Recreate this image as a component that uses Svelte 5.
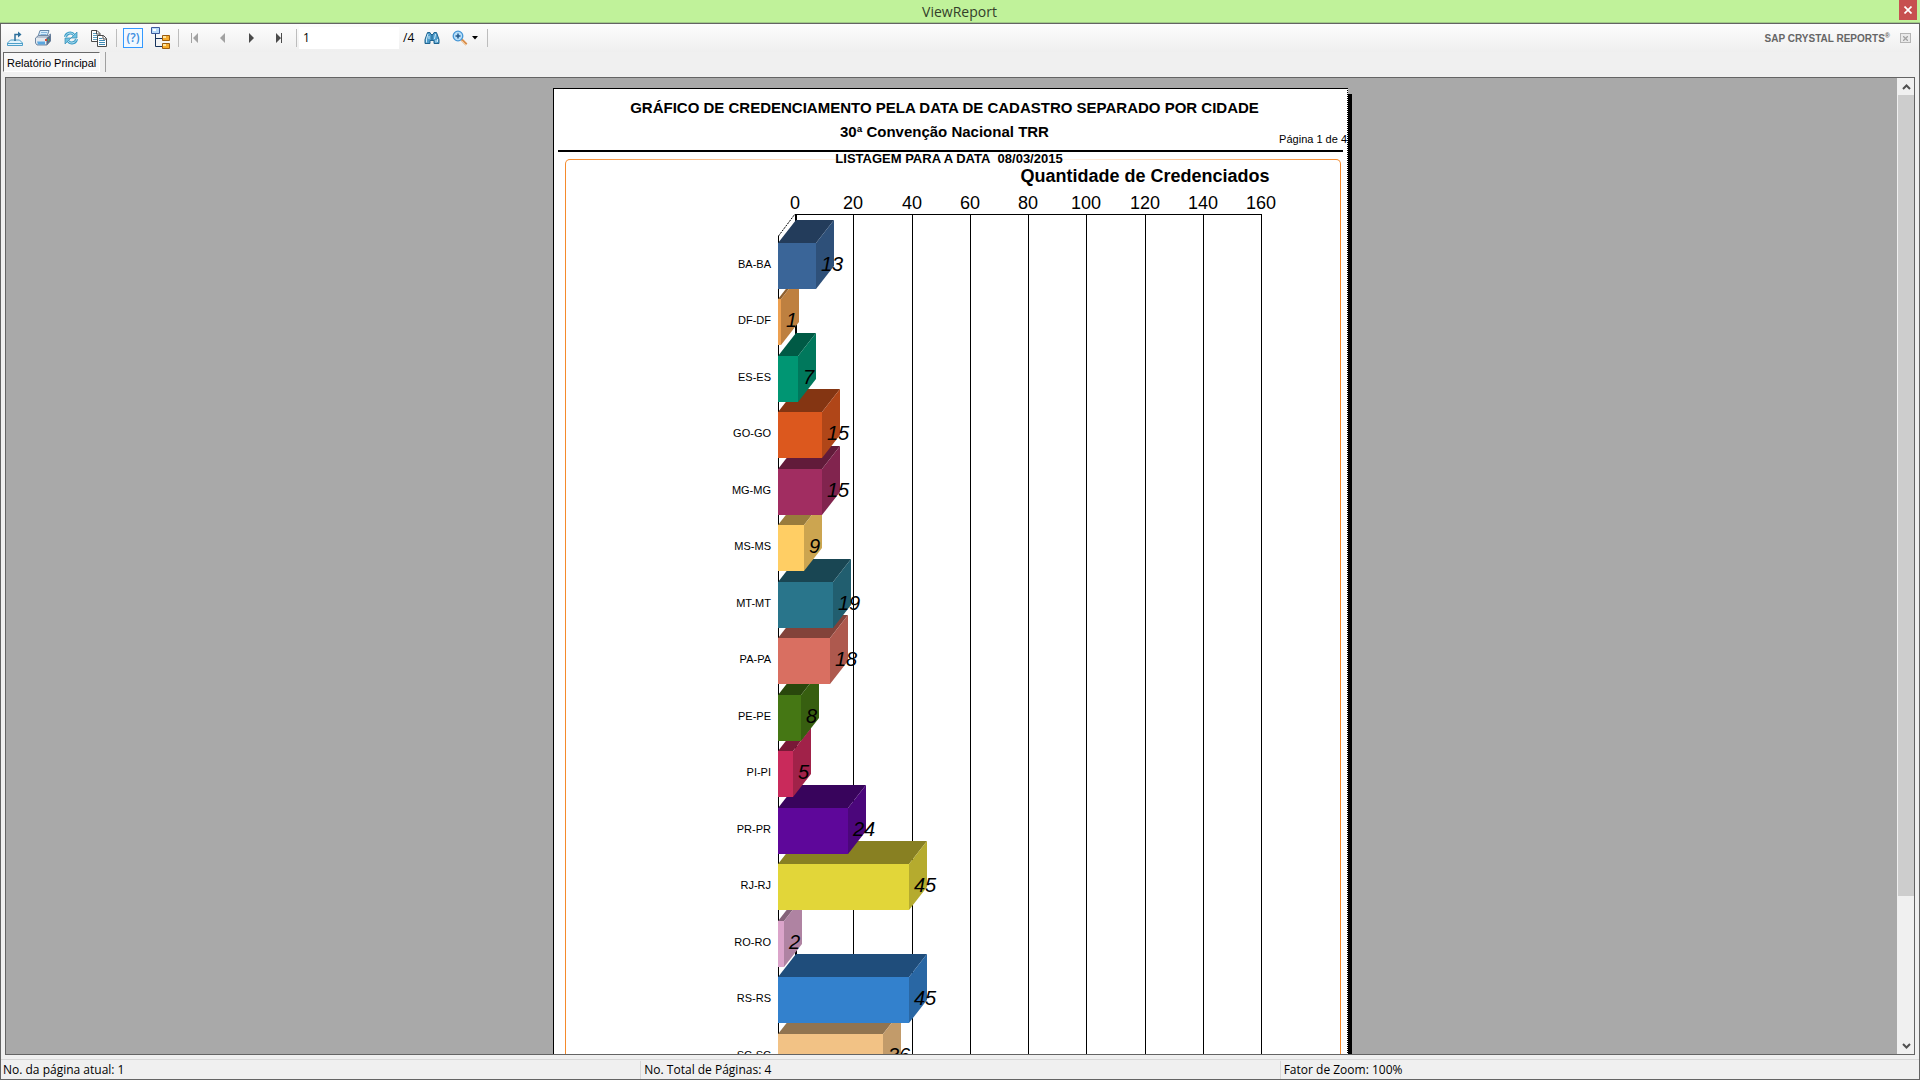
<script lang="ts">
  type Bar = { label: string; value: number; front: string; side: string; top: string };

  const bars: Bar[] = [
    { label: "BA-BA", value: 13, front: "#3a6598", side: "#2e5079", top: "#233c5b" },
    { label: "DF-DF", value: 1, front: "#eda050", side: "#be8040", top: "#8e6030" },
    { label: "ES-ES", value: 7, front: "#009673", side: "#00785c", top: "#005a45" },
    { label: "GO-GO", value: 15, front: "#dc581e", side: "#b04618", top: "#843512" },
    { label: "MG-MG", value: 15, front: "#a12d61", side: "#81244e", top: "#611b3a" },
    { label: "MS-MS", value: 9, front: "#ffce64", side: "#cca550", top: "#997c3c" },
    { label: "MT-MT", value: 19, front: "#29758b", side: "#215e6f", top: "#194653" },
    { label: "PA-PA", value: 18, front: "#d96f61", side: "#ae594e", top: "#82433a" },
    { label: "PE-PE", value: 8, front: "#457714", side: "#375f10", top: "#29470c" },
    { label: "PI-PI", value: 5, front: "#c92a5b", side: "#a12249", top: "#791937" },
    { label: "PR-PR", value: 24, front: "#5e079a", side: "#4b067b", top: "#38045c" },
    { label: "RJ-RJ", value: 45, front: "#e2d639", side: "#b5ab2e", top: "#888022" },
    { label: "RO-RO", value: 2, front: "#dba4ca", side: "#af83a2", top: "#836279" },
    { label: "RS-RS", value: 45, front: "#3381cd", side: "#2967a4", top: "#1f4d7b" },
    { label: "SC-SC", value: 36, front: "#f2c285", side: "#c29b6a", top: "#917450" },
  ];

  const ticks = [0, 20, 40, 60, 80, 100, 120, 140, 160];

  // chart geometry
  const axisX = 212;
  const zeroX = 229;
  const axisY = 47;
  const unit = 2.914;
  const pitch = 56.5;
  const barHeight = 46;
  const depthX = 18;
  const depthY = 23;

  const tickX = (t: number) => Math.round(zeroX + t * unit);
  const barY = (i: number) => Math.round(75.5 + i * pitch);
  const barEnd = (v: number) => Math.round(axisX + v * unit);

  // the lower bars go first, so that each one is covered by the one above it
  const drawOrder = bars.map((bar, i) => ({ ...bar, y: barY(i), end: barEnd(bar.value) })).reverse();

  let page = $state("1");
</script>

<div class="window">
  <header class="titlebar">
    <h1>ViewReport</h1>
    <button class="close" aria-label="Fechar">
      <svg width="8" height="8" viewBox="0 0 8 8"><path d="M.5 .5L7.5 7.5M7.5 .5L.5 7.5" stroke="#fff" stroke-width="1.7" /></svg>
    </button>
  </header>

  <div class="client">
    <div class="toolbar">
      <button aria-label="Exportar">
        <svg width="18" height="18" viewBox="0 0 18 18" fill="none">
          <path d="M4.500 11h9l3 3v2.500h-15V14z" fill="#e3f3fb" stroke="#4d9fc9" />
          <path d="M2 14.500h14" stroke="#4d9fc9" />
          <path d="M9 12V5.500h4" stroke="#2d6f9b" stroke-width="1.500" />
          <path d="M12 2.500l3.500 3-3.500 3z" fill="#2d6f9b" />
        </svg>
      </button>
      <button aria-label="Imprimir">
        <svg width="18" height="18" viewBox="0 0 18 18">
          <path d="M6 1.500h9l-2 6H4z" fill="#d9edfb" stroke="#6587a8" />
          <path d="M7 3.500h6M6.500 5.500h6" stroke="#86b6dc" />
          <path d="M1.500 9l3-2.500h10l2-1.500v7l-3.500 4h-10l-1.500-2z" fill="#b9c4d2" stroke="#7088a4" />
          <path d="M2 9h10.500v6H3l-1-1.500z" fill="#e4e9ef" />
          <path d="M3 12.500h8v3H4z" fill="#5aa7e0" />
          <path d="M12.500 9l4-3v6l-4 4z" fill="#566d89" />
          <path d="M11 10h2v2h-2z" fill="#d94934" />
          <path d="M14 10h1v2h-1z" fill="#59b34d" />
        </svg>
      </button>
      <button aria-label="Atualizar">
        <svg width="16" height="16" viewBox="0 0 16 16" fill="none">
          <path d="M2.500 7C3 3 8.500 1.500 11 5" stroke="#3b9cc6" stroke-width="3" />
          <path d="M2.500 7C3 3 8.500 1.500 11 5" stroke="#b9e4f4" />
          <path d="M14 2v6H8z" fill="#6fc2e1" stroke="#3489b3" stroke-width=".7" />
          <path d="M13.500 9C13 13 7.500 14.500 5 11" stroke="#3b9cc6" stroke-width="3" />
          <path d="M13.500 9C13 13 7.500 14.500 5 11" stroke="#b9e4f4" />
          <path d="M2 14V8h6z" fill="#6fc2e1" stroke="#3489b3" stroke-width=".7" />
        </svg>
      </button>
      <button aria-label="Copiar">
        <svg width="18" height="18" viewBox="0 0 18 18">
          <path d="M1.500 1.500h5.500l3 3v8H1.500z" fill="#fff" stroke="#4a4a4a" />
          <path d="M6.500 1.500v3.500H10" fill="none" stroke="#4a4a4a" />
          <path d="M3 4.500h3M3 6.500h5M3 8.500h5M3 10.500h5" stroke="#5c9fc0" />
          <path d="M7.500 6.500h6l3 3v8h-9z" fill="#fff" stroke="#4a4a4a" />
          <path d="M13 6.500V10h3.500" fill="none" stroke="#4a4a4a" />
          <path d="M9 9.500h3M9 11.500h6M9 13.500h6M9 15.500h6" stroke="#3f8bb4" />
        </svg>
      </button>
      <span class="sep"></span>
      <button class="help" aria-label="Ajuda"><span>(?)</span></button>
      <button aria-label="Árvore de grupos">
        <svg width="20" height="22" viewBox="0 0 20 22">
          <path d="M4.500 7v12.500H12M4.500 11.500H12" fill="none" stroke="#16325c" />
          <path d="M.5 .5h8v6h-8z" fill="#b9dcfb" stroke="#3d5a9c" />
          <path d="M2 2h3v2H2z" fill="#fff" />
          <path d="M11.500 8.500h7v5h-7zM11.500 16.500h7v5h-7z" fill="#f6ab2c" stroke="#9a5b0e" />
          <path d="M12 9h3v2h-3zM12 17h3v2h-3z" fill="#ffe7a3" />
        </svg>
      </button>
      <span class="sep"></span>
      <button aria-label="Primeira página" disabled>
        <svg width="8" height="10" viewBox="0 0 8 10" fill="#a2a2a2"><path d="M0 0h1v10H0zM7 0v10L2 5z" /></svg>
      </button>
      <button aria-label="Página anterior" disabled>
        <svg width="8" height="10" viewBox="0 0 8 10" fill="#a2a2a2"><path d="M6 0v10L1 5z" /></svg>
      </button>
      <button aria-label="Próxima página">
        <svg width="8" height="10" viewBox="0 0 8 10" fill="#4a4a4a"><path d="M2 0v10l5-5z" /></svg>
      </button>
      <button aria-label="Última página">
        <svg width="8" height="10" viewBox="0 0 8 10" fill="#4a4a4a"><path d="M1 0v10l5-5zM6 0h1v10H6z" /></svg>
      </button>
      <span class="sep"></span>
      <label class="goto">
        <input type="text" aria-label="Página" bind:value={page} />
        <span>/4</span>
      </label>
      <button aria-label="Localizar">
        <svg width="16" height="14" viewBox="0 0 16 14">
          <path d="M3.500 1.500h2.500l1 2h2l1-2h2.500l2.500 7v4h-5V9.500H6v3H1v-4z" fill="#4f9dcc" stroke="#21648f" />
          <path d="M4 3L2.500 8v3.500M11.500 3L10.500 8M12 9v2.500M5 5v3M13.500 8v3" stroke="#d0ecfa" fill="none" />
          <path d="M8 4v6" stroke="#21648f" />
        </svg>
      </button>
      <button class="zoom" aria-label="Zoom">
        <svg width="16" height="16" viewBox="0 0 16 16">
          <path d="M9.500 9.500l5 5" stroke="#d98f4e" stroke-width="2.500" />
          <path d="M9.500 10.500l4.500 4.500" stroke="#f3cfa3" />
          <circle cx="6" cy="6" r="4.800" fill="#b7dffa" stroke="#4596d6" stroke-width="1.300" />
          <path d="M6 3.500v5M3.500 6h5" stroke="#245a8c" stroke-width="1.500" />
        </svg>
        <svg width="6" height="4" viewBox="0 0 6 4"><path d="M0 0h6L3 3.500z" /></svg>
      </button>
      <span class="sep"></span>
      <span class="brand">SAP CRYSTAL REPORTS<sup>®</sup></span>
      <button class="mini-close" aria-label="Fechar visualização">
        <svg width="5" height="5" viewBox="0 0 5 5"><path d="M0 0l5 5M5 0L0 5" stroke="#a3a3a3" stroke-width="1.300" /></svg>
      </button>
    </div>

    <nav class="tabs">
      <button class="tab">Relatório Principal</button>
    </nav>

    <div class="viewer">
      <div class="canvas">
        <article class="paper">
          <header>
            <h2>GRÁFICO DE CREDENCIAMENTO PELA DATA DE CADASTRO SEPARADO POR CIDADE</h2>
            <h3>30ª Convenção Nacional TRR</h3>
          </header>
          <p class="page-no">Página 1 de 4</p>
          <hr />
          <section class="report">
            <h4>LISTAGEM PARA A DATA&nbsp; 08/03/2015</h4>
            <svg class="chart" width="770" height="920" viewBox="0 0 770 920">
              <text class="axis-title" x="579" y="15" text-anchor="middle">Quantidade de Credenciados</text>
              {#each ticks as t}
                <text class="tick" x={tickX(t)} y="42" text-anchor="middle">{t}</text>
                <rect x={tickX(t)} y={axisY} width={t === 0 ? 2 : 1} height="873" />
              {/each}
              <rect x={zeroX} y={axisY} width={tickX(160) - zeroX} height="1" />
              <rect x={axisX} y="69" width="1" height="851" />
              <!-- the wall between the front and back axes -->
              <path class="wall" d="M{axisX + 0.5} 69L{zeroX} {axisY}" />
              {#each drawOrder as bar}
                <path
                  fill={bar.top}
                  d="M{axisX} {bar.y}l{depthX} -{depthY}H{bar.end + depthX}l-{depthX} {depthY}z"
                />
                <path
                  fill={bar.side}
                  d="M{bar.end} {bar.y}l{depthX} -{depthY}v{barHeight}l-{depthX} {depthY}z"
                />
                <rect fill={bar.front} x={axisX} y={bar.y} width={bar.end - axisX} height={barHeight} />
              {/each}
              {#each drawOrder as bar}
                <text class="category" x="205" y={bar.y + 25} text-anchor="end">{bar.label}</text>
                <text class="value" x={bar.end + 5} y={bar.y + 28}>{bar.value}</text>
              {/each}
            </svg>
          </section>
        </article>
      </div>
      <div class="scrollbar">
        <button aria-label="Rolar para cima">
          <svg width="9" height="6" viewBox="0 0 9 6"><path d="M1 5l3.500-3.500L8 5" /></svg>
        </button>
        <div class="track"><div class="thumb"></div></div>
        <button aria-label="Rolar para baixo">
          <svg width="9" height="6" viewBox="0 0 9 6"><path d="M1 1l3.500 3.500L8 1" /></svg>
        </button>
      </div>
    </div>

    <footer class="status">
      <span>No. da página atual: 1</span>
      <span>No. Total de Páginas: 4</span>
      <span>Fator de Zoom: 100%</span>
    </footer>
  </div>
</div>

<style>
  :global(body) {
    margin: 0;
    overflow: hidden;
  }

  * {
    box-sizing: border-box;
  }

  .window {
    display: flex;
    flex-direction: column;
    height: 100vh;
    font: 12px/16px "Open Sans", "Noto Sans", sans-serif;
    color: #000;
  }

  button {
    display: flex;
    align-items: center;
    justify-content: center;
    padding: 0;
    border: none;
    background: none;
    font: inherit;
    color: inherit;
  }

  .titlebar {
    display: flex;
    align-items: flex-start;
    height: 23px;
    flex: none;
    padding-right: 3px;
    background: #c0f29a;
    border-bottom: 1px solid #a0c986;
  }

  .titlebar h1 {
    flex: 1;
    margin: 0;
    padding-left: 20px;
    text-align: center;
    font-size: 14px;
    font-weight: 400;
    line-height: 24px;
    color: #33402a;
  }

  .close {
    width: 18px;
    height: 20px;
    background: #c75050;
  }

  .client {
    display: flex;
    flex-direction: column;
    flex: 1;
    min-height: 0;
    border: 1px solid #646464;
    background: #f0f0f0;
  }

  .toolbar {
    display: flex;
    align-items: center;
    height: 28px;
    flex: none;
    background: linear-gradient(#fdfdfd, #efefef);
  }

  .toolbar button {
    width: 28px;
    height: 22px;
  }

  .sep {
    width: 6px;
    height: 18px;
    background: linear-gradient(90deg, transparent 3px, #bdbdbd 3px, #bdbdbd 4px, transparent 4px);
  }

  .help span {
    width: 20px;
    height: 20px;
    border: 1px solid #3399ff;
    background: #f2f9ff;
    font-weight: 600;
    line-height: 18px;
    color: #3c8ee0;
  }

  .goto {
    display: flex;
    align-items: center;
    gap: 4px;
    margin-right: 4px;
  }

  .goto input {
    width: 100px;
    height: 22px;
    padding: 0 4px 2px;
    border: none;
    background: #fff;
    font: inherit;
  }

  .toolbar .zoom {
    width: 38px;
    gap: 4px;
  }

  .brand {
    margin-left: auto;
    padding-top: 2px;
    font: bold 10px/16px "Liberation Sans", Arial, sans-serif;
    color: #666;
  }

  .brand sup {
    font-size: 7px;
    line-height: 0;
  }

  .toolbar .mini-close {
    width: 11px;
    height: 10px;
    margin: 0 8px 0 10px;
    border: 1px solid #b4b4b4;
    background: #e9e9e9;
  }

  .tabs {
    display: flex;
    flex: none;
    height: 25px;
    padding-left: 2px;
  }

  .tabs::after {
    content: "";
    width: 1px;
    height: 20px;
    margin-left: 5px;
    background: #a0a0a0;
  }

  .tab {
    height: 20px;
    padding: 1px 3px 0;
    border: 1px solid #fff;
    border-top-color: #696969;
    border-left-color: #696969;
    background: #f8f8f8;
    font: 11px/16px "Liberation Sans", Arial, sans-serif;
  }

  .viewer {
    display: flex;
    flex: 1;
    min-height: 0;
    margin: 0 4px;
    border: 1px solid #646464;
  }

  .canvas {
    display: flex;
    justify-content: center;
    align-items: flex-start;
    flex: 1;
    overflow: hidden;
    padding-top: 10px;
    background: #a9a9a9;
  }

  .paper {
    width: 795px;
    height: 1123px;
    margin-right: 2px;
    padding: 9px 4px 0;
    border: 1px solid #000;
    border-right-style: dotted;
    background: #fff;
    box-shadow: 4px 6px 0 #000;
    font-family: "Liberation Sans", Arial, sans-serif;
  }

  .paper header {
    display: grid;
    gap: 4px;
    padding-right: 12px;
  }

  .paper h2,
  .paper h3,
  .paper h4,
  .paper p {
    margin: 0;
    text-align: center;
    white-space: nowrap;
  }

  .paper h2,
  .paper h3 {
    font-size: 15px;
    line-height: 20px;
  }

  .paper .page-no {
    margin: -10px -4px 0;
    font-size: 11px;
    line-height: 14px;
    text-align: right;
  }

  hr {
    height: 2px;
    margin: 4px 0 0;
    border: none;
    background: #000;
  }

  .report {
    height: 940px;
    margin: 7px 2px 0 7px;
    border: 1px solid transparent;
    border-radius: 5px;
    background:
      linear-gradient(#fff, #fff) padding-box,
      radial-gradient(ellipse 388px 1400px at 50% 0, #fff 20%, #f58a2c 100%) border-box;
  }

  .report h4 {
    margin-top: -9px;
    padding-right: 8px;
    font-size: 13px;
    line-height: 16px;
  }

  .chart {
    display: block;
    font-family: "Liberation Sans", Arial, sans-serif;
  }

  .axis-title {
    font-size: 18px;
    font-weight: 700;
  }

  .tick {
    font-size: 18px;
  }

  .category {
    font-size: 11px;
  }

  .value {
    font-size: 20px;
    font-style: italic;
  }

  .wall {
    fill: none;
    stroke: #000;
    stroke-dasharray: 2 1;
  }

  .scrollbar {
    display: flex;
    flex-direction: column;
    width: 17px;
    padding-left: 1px;
    background: #f0f0f0;
  }

  .scrollbar button {
    height: 17px;
  }

  .scrollbar path {
    fill: none;
    stroke: #505050;
    stroke-width: 2;
  }

  .track {
    flex: 1;
  }

  .thumb {
    height: 85%;
    background: #cdcdcd;
  }

  .status {
    display: grid;
    grid-template-columns: 1fr 1fr 1fr;
    flex: none;
    height: 20px;
    margin-top: 4px;
    border-top: 1px solid #d7d7d7;
    line-height: 18px;
  }

  .status span {
    margin: 1px 0;
    padding-left: 3px;
    border-left: 1px solid #d7d7d7;
  }

  .status span:first-child {
    padding-left: 2px;
    border-left: none;
  }
</style>
